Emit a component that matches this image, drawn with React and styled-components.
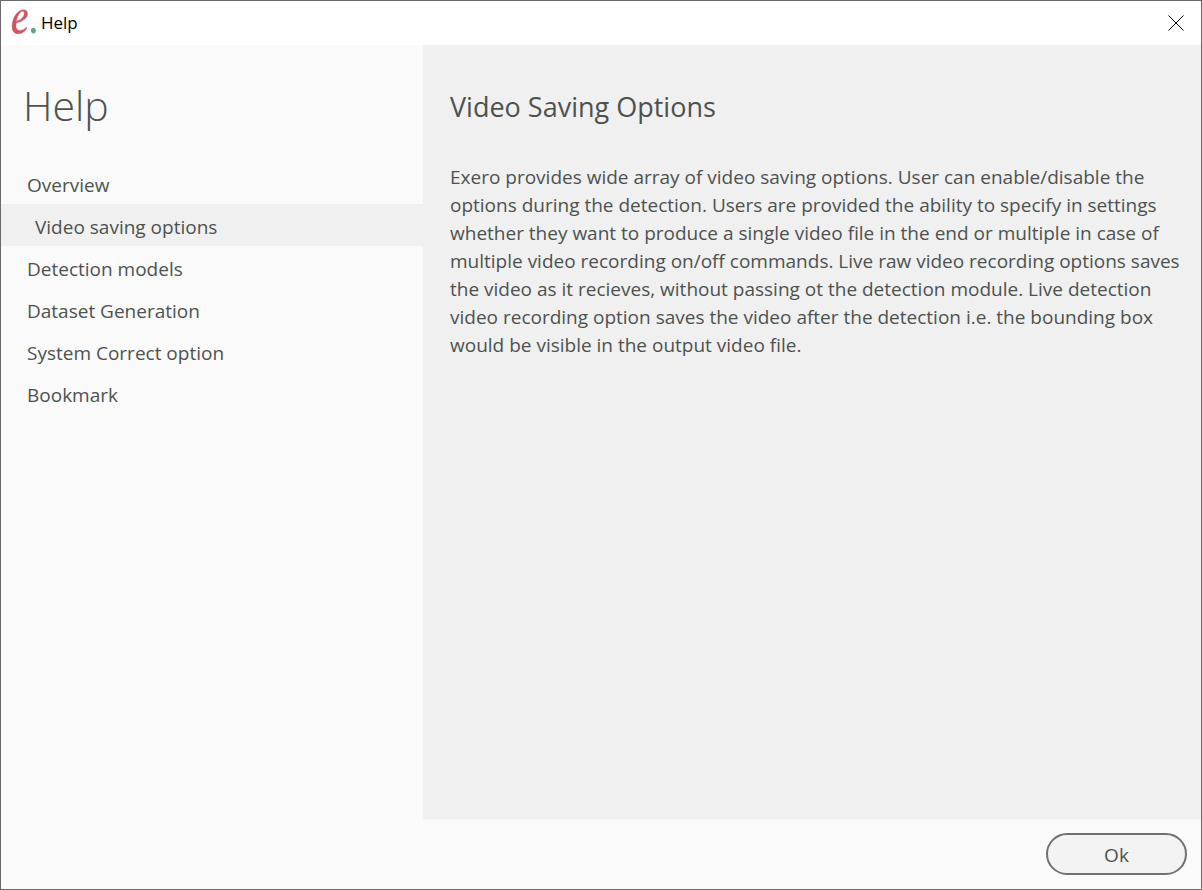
import React, { useState } from "react";
import styled, { createGlobalStyle } from "styled-components";

const GlobalStyle = createGlobalStyle`
  *, *::before, *::after { box-sizing: border-box; }
  body {
    margin: 0;
    background: #fafafa;
    color: #4d524f;
    font-family: "Segoe UI", "Open Sans", "Noto Sans", sans-serif;
    font-size: 19px;
    line-height: 28px;
  }
`;

const Window = styled.div`
  min-height: 100vh;
  display: flex;
  flex-direction: column;
  border: 1px solid #6a6a6a;
  background: #fafafa;
`;

const TitleBar = styled.header`
  display: flex;
  align-items: center;
  height: 44px;
  padding: 0 16px 0 8px;
  background: #ffffff;
  color: #000000;
`;

const WindowTitle = styled.span`
  flex: 1;
  padding-left: 4px;
  font-size: 17px;
`;

const CloseButton = styled.button`
  display: flex;
  padding: 0;
  border: 0;
  background: none;
  color: #000000;
`;

const Body = styled.div`
  flex: 1;
  display: flex;
`;

const Sidebar = styled.aside`
  flex: 0 0 422px;
  padding-top: 30px;
`;

const SidebarTitle = styled.h1`
  margin: 0 0 27px;
  padding-left: 22px;
  font-size: 41px;
  font-weight: 300;
  line-height: 60px;
`;

const Topics = styled.ul`
  margin: 0;
  padding: 0;
  list-style: none;
`;

const TopicButton = styled.button`
  display: block;
  width: 100%;
  height: 42px;
  padding: 4px 0 0 ${(p) => (p.$selected ? 34 : 26)}px;
  border: 0;
  background: ${(p) => (p.$selected ? "#f0f0f0" : "transparent")};
  color: inherit;
  font: inherit;
  text-align: left;
`;

const Content = styled.main`
  flex: 1;
  min-width: 0;
  padding: 42px 12px 28px 27px;
  background: #f0f0f0;
`;

const ContentTitle = styled.h2`
  margin: 0 0 36px;
  font-size: 27px;
  font-weight: 400;
  line-height: 40px;
`;

const Paragraph = styled.p`
  margin: 0;
`;

const Footer = styled.footer`
  display: flex;
  justify-content: flex-end;
  padding: 14px;
`;

const OkButton = styled.button`
  width: 141px;
  height: 42px;
  padding: 2px 0 0;
  border: 2px solid #707070;
  border-radius: 21px;
  background: #f3f3f3;
  color: inherit;
  font: inherit;
`;

const Logo = () => (
  <svg width="28" height="28" viewBox="0 0 28 28" aria-hidden="true">
    <path
      fillRule="evenodd"
      fill="#cf5565"
      stroke="#cf5565"
      strokeWidth=".4"
      d="M13.4 .9C17 .5 19 2.4 18.5 5.6C17.8 9.9 12.8 12.8 7.2 13.9C6.4 18.6 7.6 21.4 10.8 21.4C13.3 21.4 15.5 20.3 17.2 18.2L18 19C16 22.9 12.8 24.8 9.2 24.8C4.8 24.8 2.7 21.2 3.1 16.2C3.6 8.9 7.8 1.8 13.4 .9ZM7.4 12.2C11.4 11.2 14.7 8.5 15.2 5C15.5 2.8 14.6 1.7 13 2.3C10.2 3.4 8.3 7.7 7.4 12.2Z"
    />
    <ellipse cx="24.4" cy="21.6" rx="2.4" ry="2.8" fill="#64a386" />
  </svg>
);

const CloseIcon = () => (
  <svg width="17" height="16" viewBox="0 0 17 16" aria-hidden="true">
    <path
      d="M.5 .5L15.5 15.5M15.5 .5L.5 15.5"
      stroke="currentColor"
      strokeWidth="1"
    />
  </svg>
);

const topics = [
  "Overview",
  "Video saving options",
  "Detection models",
  "Dataset Generation",
  "System Correct option",
  "Bookmark",
];

export default function App() {
  const [selected, setSelected] = useState("Video saving options");
  return (
    <>
      <GlobalStyle />
      <Window>
        <TitleBar>
          <Logo />
          <WindowTitle>Help</WindowTitle>
          <CloseButton type="button" aria-label="Close">
            <CloseIcon />
          </CloseButton>
        </TitleBar>
        <Body>
          <Sidebar>
            <SidebarTitle>Help</SidebarTitle>
            <nav aria-label="Help topics">
              <Topics>
                {topics.map((topic) => (
                  <li key={topic}>
                    <TopicButton
                      type="button"
                      $selected={topic === selected}
                      aria-current={topic === selected ? "page" : undefined}
                      onClick={() => setSelected(topic)}
                    >
                      {topic}
                    </TopicButton>
                  </li>
                ))}
              </Topics>
            </nav>
          </Sidebar>
          <Content>
            <ContentTitle>Video Saving Options</ContentTitle>
            <Paragraph>
              Exero provides wide array of video saving options. User can enable/disable the
              options during the detection. Users are provided the ability to specify in settings
              whether they want to produce a single video file in the end or multiple in case of
              multiple video recording on/off commands. Live raw video recording options saves
              the video as it recieves, without passing ot the detection module. Live detection
              video recording option saves the video after the detection i.e. the bounding box
              would be visible in the output video file.
            </Paragraph>
          </Content>
        </Body>
        <Footer>
          <OkButton type="button">Ok</OkButton>
        </Footer>
      </Window>
    </>
  );
}
